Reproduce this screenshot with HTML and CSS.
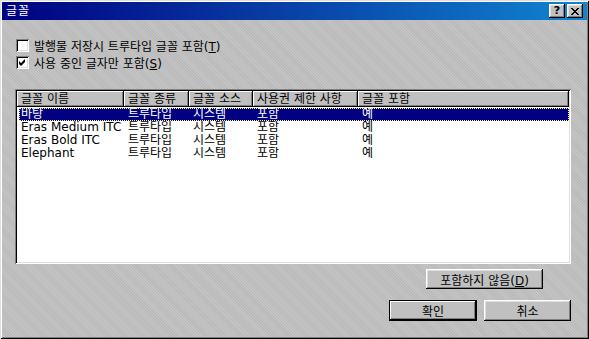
FILE: index.html
```html
<!DOCTYPE html>
<html>
<head>
    <meta charset="utf-8">
    <title>글꼴</title>
    <link rel="stylesheet" href="styles.css">
</head>
<body>
    <div class="window">
        <div class="title-bar">
            <span class="title-text">글꼴</span>
            <div class="title-buttons">
                <span class="title-btn">?</span>
                <span class="title-btn close">
                    <svg width="8" height="7" viewBox="0 0 8 7">
                        <path d="M0 0h2v1h-2zM6 0h2v1h-2zM1 1h2v1h-2zM5 1h2v1h-2zM2 2h4v1h-4zM3 3h2v1h-2zM2 4h4v1h-4zM1 5h2v1h-2zM5 5h2v1h-2zM0 6h2v1h-2zM6 6h2v1h-2z" fill="#000"/>
                    </svg>
                </span>
            </div>
        </div>

        <div class="content">
            <label class="check-row">
                <span class="check-box"></span>
                <span>발행물 저장시 트루타입 글꼴 포함(<u>T</u>)</span>
            </label>
            <label class="check-row">
                <span class="check-box">
                    <svg width="7" height="7" viewBox="0 0 7 7">
                        <path d="M6 0v3l-4 4l-2-2v-3l2 2z" fill="#000"/>
                    </svg>
                </span>
                <span>사용 중인 글자만 포함(<u>S</u>)</span>
            </label>

            <div class="list-view">
                <div class="list-header">
                    <span class="col-head c1">글꼴 이름</span>
                    <span class="col-head c2">글꼴 종류</span>
                    <span class="col-head c3">글꼴 소스</span>
                    <span class="col-head c4">사용권 제한 사항</span>
                    <span class="col-head c5">글꼴 포함</span>
                </div>
                <div class="list-row selected">
                    <span class="cell c1">바탕</span>
                    <span class="cell c2">트루타입</span>
                    <span class="cell c3">시스템</span>
                    <span class="cell c4">포함</span>
                    <span class="cell c5">예</span>
                </div>
                <div class="list-row">
                    <span class="cell c1">Eras Medium ITC</span>
                    <span class="cell c2">트루타입</span>
                    <span class="cell c3">시스템</span>
                    <span class="cell c4">포함</span>
                    <span class="cell c5">예</span>
                </div>
                <div class="list-row">
                    <span class="cell c1">Eras Bold ITC</span>
                    <span class="cell c2">트루타입</span>
                    <span class="cell c3">시스템</span>
                    <span class="cell c4">포함</span>
                    <span class="cell c5">예</span>
                </div>
                <div class="list-row">
                    <span class="cell c1">Elephant</span>
                    <span class="cell c2">트루타입</span>
                    <span class="cell c3">시스템</span>
                    <span class="cell c4">포함</span>
                    <span class="cell c5">예</span>
                </div>
            </div>

            <div class="exclude-row">
                <button class="btn exclude">포함하지 않음(<u>D</u>)</button>
            </div>

            <div class="dialog-buttons">
                <button class="btn default">확인</button>
                <button class="btn">취소</button>
            </div>
        </div>
    </div>
</body>
</html>
```

FILE: styles.css
```css
html, body {
    margin: 0;
    padding: 0;
    background: #c0c0c0;
}

body {
    font-family: "DejaVu Sans", "Noto Sans CJK KR", sans-serif;
    font-size: 12px;
    color: #000;
}

.window {
    width: 589px;
    height: 339px;
    box-sizing: border-box;
    padding: 2px;
    background-color: #c0c0c0;
    background-image: repeating-linear-gradient(45deg, rgba(255,255,255,0.07) 0px, rgba(255,255,255,0.07) 1px, rgba(0,0,0,0.03) 1px, rgba(0,0,0,0.03) 2px);
    box-shadow: inset 1px 1px 0 #dfdfdf, inset -1px -1px 0 #000, inset 2px 2px 0 #fff, inset -2px -2px 0 #808080;
    display: flex;
    flex-direction: column;
}

/* title bar */
.title-bar {
    height: 18px;
    background: linear-gradient(to right, #000080, #1084d0);
    color: #fff;
    display: flex;
    align-items: center;
    justify-content: space-between;
    padding: 0 4px 0 4px;
}

.title-text {
    font-size: 12px;
    line-height: 18px;
    letter-spacing: 1px;
}

.title-buttons {
    display: flex;
    gap: 2px;
}

.title-btn {
    width: 16px;
    height: 14px;
    box-sizing: border-box;
    background: #c0c0c0;
    color: #000;
    font-weight: bold;
    font-size: 11px;
    line-height: 14px;
    display: flex;
    align-items: center;
    justify-content: center;
    box-shadow: inset -1px -1px 0 #000, inset 1px 1px 0 #fff, inset -2px -2px 0 #808080, inset 2px 2px 0 #dfdfdf;
}

/* content */
.content {
    flex: 1;
    padding: 17px 16px 0 14px;
    display: flex;
    flex-direction: column;
}

.check-row {
    display: flex;
    align-items: center;
    gap: 5px;
    height: 17px;
}

.check-box {
    width: 13px;
    height: 13px;
    box-sizing: border-box;
    background: #fff;
    box-shadow: inset 1px 1px 0 #808080, inset -1px -1px 0 #fff, inset 2px 2px 0 #000, inset -2px -2px 0 #dfdfdf;
    display: flex;
    align-items: center;
    justify-content: center;
}

/* list view */
.list-view {
    margin-top: 18px;
    margin-left: -1px;
    height: 175px;
    box-sizing: border-box;
    padding: 2px;
    background: #fff;
    box-shadow: inset 1px 1px 0 #808080, inset -1px -1px 0 #fff, inset 2px 2px 0 #000, inset -2px -2px 0 #dfdfdf;
}

.list-header {
    display: flex;
    height: 16px;
    background: #c0c0c0;
}

.col-head {
    box-sizing: border-box;
    padding-left: 4px;
    line-height: 16px;
    white-space: nowrap;
    overflow: hidden;
    box-shadow: inset -1px -1px 0 #000, inset 1px 1px 0 #fff, inset -2px -2px 0 #808080;
}

.c1 { width: 107px; }
.c2 { width: 65px; }
.c3 { width: 64px; }
.c4 { width: 105px; }
.c5 { flex: 1; }

.list-row {
    display: flex;
    height: 13px;
    line-height: 13px;
}

.list-row .cell {
    display: block;
    box-sizing: border-box;
    height: 13px;
    padding-left: 4px;
    white-space: nowrap;
    overflow: hidden;
}

.list-header + .list-row {
    margin-top: 1px;
}

.list-row.selected {
    background: #000080;
    color: #fff;
    outline: 1px dotted #ffff80;
    outline-offset: -1px;
    margin-left: 2px;
}

.list-row.selected .c1 {
    width: 105px;
    padding-left: 2px;
}

/* buttons */
.btn {
    font-family: "DejaVu Sans", "Noto Sans CJK KR", sans-serif;
    font-size: 12px;
    color: #000;
    background: #c0c0c0;
    border: none;
    padding: 0;
    box-sizing: border-box;
    box-shadow: inset -1px -1px 0 #000, inset 1px 1px 0 #fff, inset -2px -2px 0 #808080, inset 2px 2px 0 #dfdfdf;
}

.exclude-row {
    display: flex;
    justify-content: flex-end;
    margin-top: 5px;
    padding-right: 28px;
}

.btn.exclude {
    width: 117px;
    height: 20px;
}

.dialog-buttons {
    display: flex;
    justify-content: flex-end;
    gap: 7px;
    margin-top: 11px;
}

.dialog-buttons .btn {
    width: 87px;
    height: 21px;
}

.btn.default {
    width: 88px;
    box-shadow: inset 0 0 0 1px #000, inset -2px -2px 0 #000, inset 2px 2px 0 #fff, inset -3px -3px 0 #808080;
}
```
